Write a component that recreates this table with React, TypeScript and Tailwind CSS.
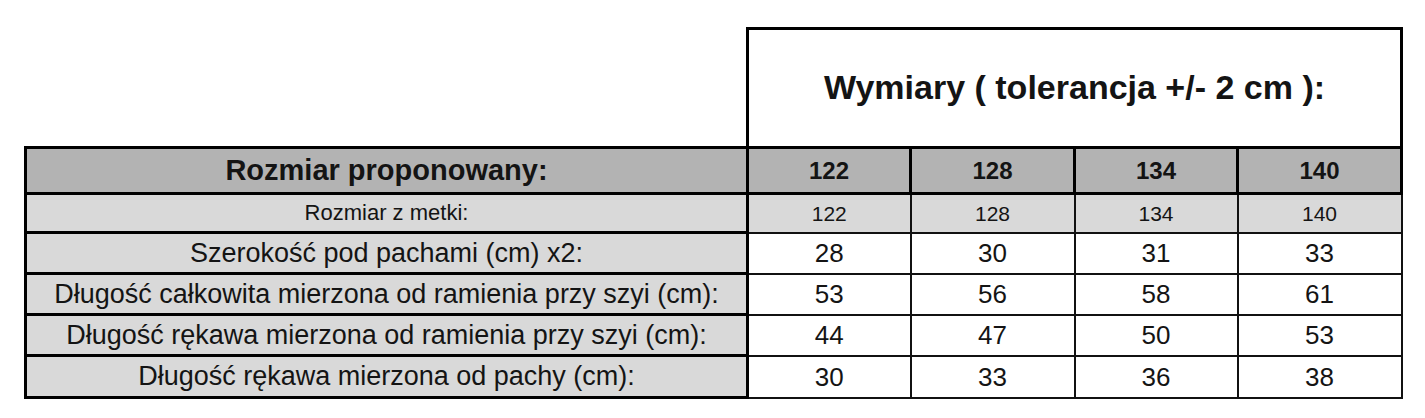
import React from 'react';

const SIZES = ['122', '128', '134', '140'];

const ROWS: { label: string; values: string[]; h: string }[] = [
  { label: 'Szerokość pod pachami (cm) x2:', values: ['28', '30', '31', '33'], h: 'h-[41px]' },
  { label: 'Długość całkowita mierzona od ramienia przy szyi (cm):', values: ['53', '56', '58', '61'], h: 'h-[41px]' },
  { label: 'Długość rękawa mierzona od ramienia przy szyi (cm):', values: ['44', '47', '50', '53'], h: 'h-[41px]' },
  { label: 'Długość rękawa mierzona od pachy (cm):', values: ['30', '33', '36', '38'], h: 'h-[42px]' },
];

const font = { fontFamily: '"Liberation Sans", Arial, sans-serif' };

export default function App() {
  return (
    <div className="w-[1425px] h-[418px] bg-white pt-[27px] pl-[24px] text-[#141414]" style={font}>
      <table className="w-[1376px] table-fixed border-collapse">
        <colgroup>
          <col className="w-[722px]" />
          <col className="w-[163px]" />
          <col className="w-[164px]" />
          <col className="w-[163px]" />
          <col className="w-[164px]" />
        </colgroup>
        <tbody>
          {/* Title box above the size columns */}
          <tr>
            <td className="border-0 p-0" />
            <td colSpan={4} className="h-[119px] border-[3px] border-black p-0 text-center align-middle">
              <span className="text-[34px] font-bold leading-none">Wymiary ( tolerancja +/- 2 cm ):</span>
            </td>
          </tr>

          {/* Proposed size header */}
          <tr className="bg-[#b3b3b3]">
            <td className="h-[46px] border-[3px] border-black p-0 text-center text-[29px] font-bold leading-none">
              Rozmiar proponowany:
            </td>
            {SIZES.map((s) => (
              <td key={s} className="border-[3px] border-black p-0 text-center text-[24px] font-bold leading-none">
                {s}
              </td>
            ))}
          </tr>

          {/* Label size */}
          <tr className="bg-[#d9d9d9]">
            <td className="h-[39px] border-[3px] border-black p-0 text-center text-[22px] leading-none">
              Rozmiar z metki:
            </td>
            {SIZES.map((s) => (
              <td key={s} className="border-2 border-[#111] p-0 text-center text-[21px] leading-none">
                {s}
              </td>
            ))}
          </tr>

          {ROWS.map((row) => (
            <tr key={row.label}>
              <td className={`${row.h} border-[3px] border-black bg-[#d9d9d9] p-0 text-center text-[27px] leading-none whitespace-nowrap`}>
                {row.label}
              </td>
              {row.values.map((v, i) => (
                <td key={i} className="border-2 border-[#111] bg-white p-0 text-center text-[26px] leading-none">
                  {v}
                </td>
              ))}
            </tr>
          ))}
        </tbody>
      </table>
    </div>
  );
}
